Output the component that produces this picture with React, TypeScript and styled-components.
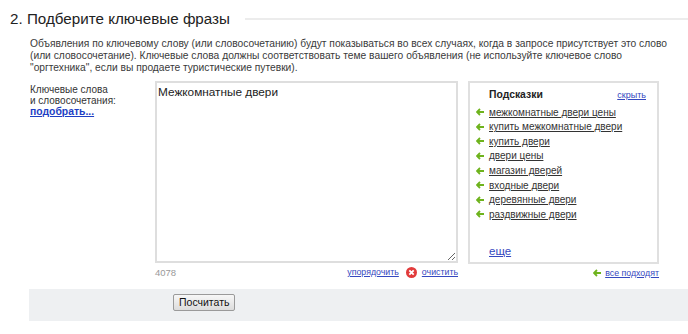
import React from "react";
import styled, { createGlobalStyle } from "styled-components";

const Global = createGlobalStyle`
  html, body { margin: 0; padding: 0; background: #fff; }
  body { font-family: Arial, "Liberation Sans", sans-serif; color: #333; width: 688px; height: 334px; overflow: hidden; }
`;

const Page = styled.div`
  display: flex;
  flex-direction: column;
  width: 688px;
`;

const HeaderRow = styled.div`
  display: flex;
  align-items: center;
  height: 36px;
  padding-left: 10px;
`;

const Title = styled.h2`
  margin: 0;
  font-size: 15.2px;
  font-weight: normal;
  color: #222;
  white-space: nowrap;
`;

const Rule = styled.div`
  flex: 1;
  height: 2px;
  background: #ececec;
  margin-left: 15px;
  margin-top: 2px;
`;

const Description = styled.p`
  margin: 0;
  padding: 2px 0 0 30px;
  font-size: 10.25px;
  line-height: 12px;
  color: #3a3a3a;
  white-space: nowrap;
`;

const FormRow = styled.div`
  display: grid;
  grid-template-columns: 115px 303px 191px;
  column-gap: 10px;
  padding-left: 30px;
  margin-top: 7px;
`;

const Label = styled.div`
  font-size: 10px;
  line-height: 11px;
  color: #333;
  padding-top: 3px;
`;

const PickLink = styled.a`
  display: inline-block;
  font-size: 10.4px;
  font-weight: bold;
  color: #1d3ec4;
  text-decoration: underline;
  cursor: pointer;
`;

const Column = styled.div`
  display: flex;
  flex-direction: column;
`;

const Area = styled.textarea`
  box-sizing: border-box;
  width: 303px;
  height: 182px;
  border: 2px solid #dedede;
  padding: 2px 1px;
  font-family: Arial, "Liberation Sans", sans-serif;
  font-size: 11.8px;
  color: #222;
  resize: both;
  outline: none;
  margin: 0;
`;

const UnderRow = styled.div`
  display: flex;
  align-items: center;
  height: 14px;
  margin-top: 2px;
`;

const Counter = styled.span`
  color: #999;
  font-size: 9.5px;
  flex: 1;
`;

const BlueLink = styled.a<{ $ml?: number; $size?: number }>`
  color: #3548c0;
  text-decoration: underline;
  font-size: ${p => p.$size ?? 8.8}px;
  cursor: pointer;
  margin-left: ${p => p.$ml ?? 0}px;
`;

const Hints = styled.div`
  box-sizing: border-box;
  width: 191px;
  height: 183px;
  border: 2px solid #e0e0e0;
  padding: 6px 11px 0 6px;
  display: flex;
  flex-direction: column;
`;

const HintsHead = styled.div`
  display: flex;
  align-items: baseline;
  justify-content: space-between;
  padding-left: 13px;
  height: 16px;
`;

const HintsTitle = styled.span`
  font-weight: bold;
  font-size: 10.4px;
  color: #222;
`;

const HintList = styled.ul`
  list-style: none;
  margin: 0;
  padding: 0;
  display: flex;
  flex-direction: column;
`;

const HintItem = styled.li`
  display: flex;
  align-items: center;
  height: 14.57px;
  font-size: 10px;
`;

const HintText = styled.a`
  color: #333;
  text-decoration: underline;
  cursor: pointer;
  margin-left: 5px;
`;

const MoreRow = styled.div`
  padding-left: 13px;
  margin-top: 19px;
`;

const AllRow = styled.div`
  display: flex;
  align-items: center;
  justify-content: flex-end;
  height: 14px;
  margin-top: 2px;
`;

const Band = styled.div`
  margin: 9px 0 0 29px;
  height: 32px;
  background: #eef0f2;
  display: flex;
  align-items: flex-start;
  padding-left: 144px;
`;

const Button = styled.button`
  margin-top: 5px;
  height: 17px;
  padding: 0 5px;
  font-family: Arial, "Liberation Sans", sans-serif;
  font-size: 10.5px;
  line-height: 15px;
  color: #111;
  border: 1px solid #9a9a9a;
  border-radius: 2px;
  background: linear-gradient(#f7f7f7, #dcdcdc);
  cursor: pointer;
`;

const Arrow = () => (
  <svg width="8" height="8" viewBox="0 0 8 8" aria-hidden="true">
    <path d="M4 1 L1 4 L4 7 M1 4 H8" stroke="#6eb31d" strokeWidth="1.8" fill="none" />
  </svg>
);

const ClearIcon = () => (
  <svg width="11" height="11" viewBox="0 0 11 11" aria-hidden="true" style={{ marginLeft: 7 }}>
    <circle cx="5.5" cy="5.5" r="5.5" fill="#e23b3b" />
    <path d="M3.3 3.3 L7.7 7.7 M7.7 3.3 L3.3 7.7" stroke="#fff" strokeWidth="1.8" />
  </svg>
);

const hints = [
  "межкомнатные двери цены",
  "купить межкомнатные двери",
  "купить двери",
  "двери цены",
  "магазин дверей",
  "входные двери",
  "деревянные двери",
  "раздвижные двери",
];

export default function App() {
  return (
    <Page>
      <Global />
      <HeaderRow>
        <Title>2. Подберите ключевые фразы</Title>
        <Rule />
      </HeaderRow>
      <Description>
        Объявления по ключевому слову (или словосочетанию) будут показываться во всех случаях, когда в запросе присутствует это слово
        <br />
        (или словосочетание). Ключевые слова должны соответствовать теме вашего объявления (не используйте ключевое слово
        <br />
        "оргтехника", если вы продаете туристические путевки).
      </Description>
      <FormRow>
        <Label>
          Ключевые слова
          <br />и словосочетания:
          <br />
          <PickLink>подобрать...</PickLink>
        </Label>
        <Column>
          <Area defaultValue="Межкомнатные двери" />
          <UnderRow>
            <Counter>4078</Counter>
            <BlueLink>упорядочить</BlueLink>
            <ClearIcon />
            <BlueLink $ml={5}>очистить</BlueLink>
          </UnderRow>
        </Column>
        <Column>
          <Hints>
            <HintsHead>
              <HintsTitle>Подсказки</HintsTitle>
              <BlueLink $size={9}>скрыть</BlueLink>
            </HintsHead>
            <HintList>
              {hints.map(h => (
                <HintItem key={h}>
                  <Arrow />
                  <HintText>{h}</HintText>
                </HintItem>
              ))}
            </HintList>
            <MoreRow>
              <BlueLink $size={11.5}>еще</BlueLink>
            </MoreRow>
          </Hints>
          <AllRow>
            <Arrow />
            <BlueLink $ml={4}>все подходят</BlueLink>
          </AllRow>
        </Column>
      </FormRow>
      <Band>
        <Button>Посчитать</Button>
      </Band>
    </Page>
  );
}
